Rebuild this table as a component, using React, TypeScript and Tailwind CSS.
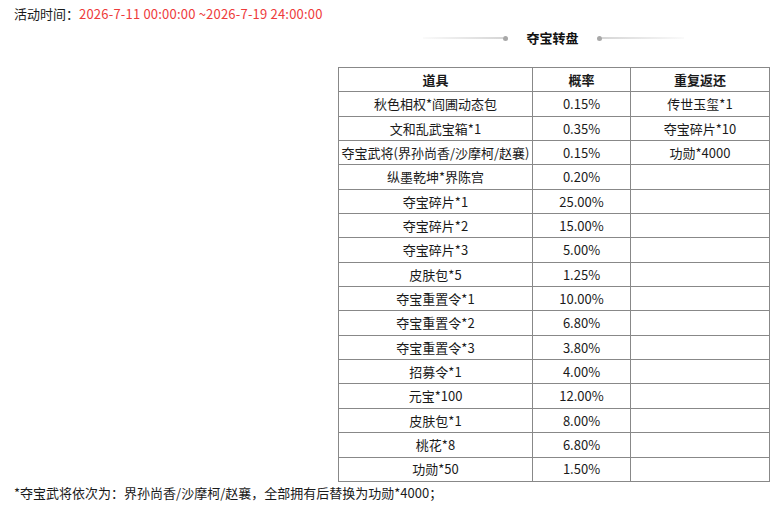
import React from "react";

const rows: [string, string, string][] = [
  ["秋色相权*阎圃动态包", "0.15%", "传世玉玺*1"],
  ["文和乱武宝箱*1", "0.35%", "夺宝碎片*10"],
  ["夺宝武将(界孙尚香/沙摩柯/赵襄)", "0.15%", "功勋*4000"],
  ["纵墨乾坤*界陈宫", "0.20%", ""],
  ["夺宝碎片*1", "25.00%", ""],
  ["夺宝碎片*2", "15.00%", ""],
  ["夺宝碎片*3", "5.00%", ""],
  ["皮肤包*5", "1.25%", ""],
  ["夺宝重置令*1", "10.00%", ""],
  ["夺宝重置令*2", "6.80%", ""],
  ["夺宝重置令*3", "3.80%", ""],
  ["招募令*1", "4.00%", ""],
  ["元宝*100", "12.00%", ""],
  ["皮肤包*1", "8.00%", ""],
  ["桃花*8", "6.80%", ""],
  ["功勋*50", "1.50%", ""],
];

export default function App() {
  return (
    <div
      className="w-[781px] h-[507px] bg-white text-[13px] text-[#1a1a1a] overflow-hidden"
      style={{ fontFamily: '"Noto Sans CJK SC", "Noto Sans", sans-serif' }}
    >
      <div className="pl-[14px] pt-[5px] leading-[18px]">
        活动时间：<span className="text-[#ee3b3b] tracking-[0.2px]">2026-7-11 00:00:00 ~2026-7-19 24:00:00</span>
      </div>

      <div className="ml-auto mr-[12px] w-[431px]">
        <div className="mt-[2px] h-[26px] flex items-center justify-center gap-[18px]">
          <div className="flex items-center">
            <div className="w-[80px] h-[2px] bg-gradient-to-r from-[#fafafa] to-[#d6d6d6]" />
            <div className="w-[5px] h-[5px] rounded-full bg-[#a8a8a8]" />
          </div>
          <div className="font-bold text-[13px] text-[#111]">夺宝转盘</div>
          <div className="flex items-center">
            <div className="w-[5px] h-[5px] rounded-full bg-[#a8a8a8]" />
            <div className="w-[82px] h-[2px] bg-gradient-to-r from-[#d6d6d6] to-[#fafafa]" />
          </div>
        </div>

        <table className="mt-[16px] w-[431px] border-collapse text-center table-fixed">
          <colgroup>
            <col className="w-[194px]" />
            <col className="w-[98px]" />
            <col className="w-[139px]" />
          </colgroup>
          <thead>
            <tr className="h-[24.35px]">
              <th className="border border-[#888] font-bold p-0">道具</th>
              <th className="border border-[#888] font-bold p-0">概率</th>
              <th className="border border-[#888] font-bold p-0">重复返还</th>
            </tr>
          </thead>
          <tbody>
            {rows.map(([a, b, c], i) => (
              <tr key={i} className="h-[24.35px]">
                <td className="border border-[#888] p-0 whitespace-nowrap">{a}</td>
                <td className="border border-[#888] p-0">{b}</td>
                <td className="border border-[#888] p-0">{c}</td>
              </tr>
            ))}
          </tbody>
        </table>
      </div>

      <div className="pl-[14px] mt-[2px] leading-[18px]">
        *夺宝武将依次为：界孙尚香/沙摩柯/赵襄，全部拥有后替换为功勋*4000；
      </div>
    </div>
  );
}
